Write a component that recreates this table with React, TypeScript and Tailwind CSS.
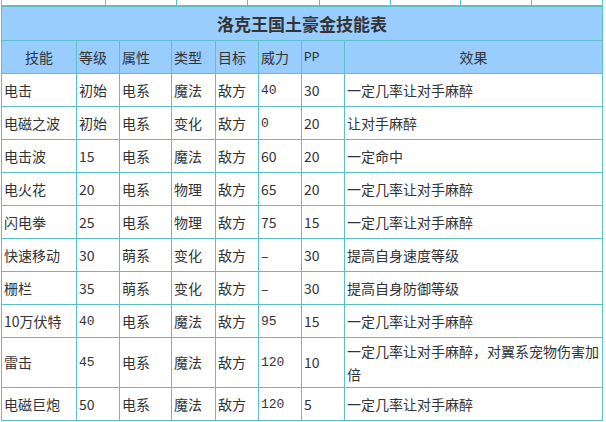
import React from "react";

type Row = {
  name: string;
  level: string;
  attr: string;
  kind: string;
  target: string;
  power: string;
  pp: string;
  effect: string;
  monoLevel?: boolean;
  monoPower?: boolean;
  tall?: boolean;
};

const rows: Row[] = [
  { name: "电击", level: "初始", attr: "电系", kind: "魔法", target: "敌方", power: "40", pp: "30", effect: "一定几率让对手麻醉", monoPower: true },
  { name: "电磁之波", level: "初始", attr: "电系", kind: "变化", target: "敌方", power: "0", pp: "20", effect: "让对手麻醉", monoPower: true },
  { name: "电击波", level: "15", attr: "电系", kind: "魔法", target: "敌方", power: "60", pp: "20", effect: "一定命中" },
  { name: "电火花", level: "20", attr: "电系", kind: "物理", target: "敌方", power: "65", pp: "20", effect: "一定几率让对手麻醉" },
  { name: "闪电拳", level: "25", attr: "电系", kind: "物理", target: "敌方", power: "75", pp: "15", effect: "一定几率让对手麻醉" },
  { name: "快速移动", level: "30", attr: "萌系", kind: "变化", target: "敌方", power: "–", pp: "30", effect: "提高自身速度等级" },
  { name: "栅栏", level: "35", attr: "萌系", kind: "变化", target: "敌方", power: "–", pp: "30", effect: "提高自身防御等级" },
  { name: "10万伏特", level: "40", attr: "电系", kind: "魔法", target: "敌方", power: "95", pp: "15", effect: "一定几率让对手麻醉", monoLevel: true, monoPower: true },
  { name: "雷击", level: "45", attr: "电系", kind: "魔法", target: "敌方", power: "120", pp: "10", effect: "一定几率让对手麻醉，对翼系宠物伤害加倍", monoLevel: true, monoPower: true, tall: true },
  { name: "电磁巨炮", level: "50", attr: "电系", kind: "魔法", target: "敌方", power: "120", pp: "5", effect: "一定几率让对手麻醉", monoPower: true },
];

const cell = "border border-[#5bc0c8] px-[2px] py-px align-middle text-left";
const mono = "font-['Liberation_Mono',monospace] text-[13px]";

export default function App() {
  return (
    <div className="w-[606px] h-[422px] overflow-hidden bg-white text-[#333] font-['Noto_Sans_CJK_SC','Noto_Sans',sans-serif] text-[14px] leading-[23px]">
      {/* bottom edge of the table above */}
      <div className="ml-[1px] flex h-[6px] w-[602px] border-l border-b border-[#5bc0c8]">
        <div className="w-[104px] border-r border-[#5bc0c8]" />
        <div className="w-[71px] border-r border-[#5bc0c8]" />
        <div className="w-[71px] border-r border-[#5bc0c8]" />
        <div className="w-[72px] border-r border-[#5bc0c8]" />
        <div className="w-[71px] border-r border-[#5bc0c8]" />
        <div className="w-[70px] border-r border-[#5bc0c8]" />
        <div className="w-[71px] border-r border-[#5bc0c8]" />
        <div className="w-[71px] border-r border-[#5bc0c8]" />
      </div>

      <table className="ml-[1px] w-[602px] table-fixed border-collapse">
        <colgroup>
          <col className="w-[75px]" />
          <col className="w-[43px]" />
          <col className="w-[52px]" />
          <col className="w-[44px]" />
          <col className="w-[43px]" />
          <col className="w-[43px]" />
          <col className="w-[43px]" />
          <col className="w-[258px]" />
        </colgroup>
        <tbody>
          <tr className="bg-[#99ccff]">
            <td colSpan={8} className="h-[34px] border border-[#5bc0c8] text-center align-middle text-[17px] font-bold">
              洛克王国土豪金技能表
            </td>
          </tr>
          <tr className="bg-[#99ccff]">
            <td className={`${cell} h-[33px] !text-center`}>技能</td>
            <td className={cell}>等级</td>
            <td className={cell}>属性</td>
            <td className={cell}>类型</td>
            <td className={cell}>目标</td>
            <td className={cell}>威力</td>
            <td className={`${cell} ${mono}`}>PP</td>
            <td className={`${cell} !text-center`}>效果</td>
          </tr>
          {rows.map((r) => (
            <tr key={r.name}>
              <td className={`${cell} ${r.tall ? "h-[50px]" : "h-[33px]"}`}>{r.name}</td>
              <td className={`${cell} ${r.monoLevel ? mono : ""}`}>{r.level}</td>
              <td className={cell}>{r.attr}</td>
              <td className={cell}>{r.kind}</td>
              <td className={cell}>{r.target}</td>
              <td className={`${cell} ${r.monoPower ? mono : ""}`}>{r.power}</td>
              <td className={cell}>{r.pp}</td>
              <td className={cell}>{r.effect}</td>
            </tr>
          ))}
        </tbody>
      </table>
    </div>
  );
}
